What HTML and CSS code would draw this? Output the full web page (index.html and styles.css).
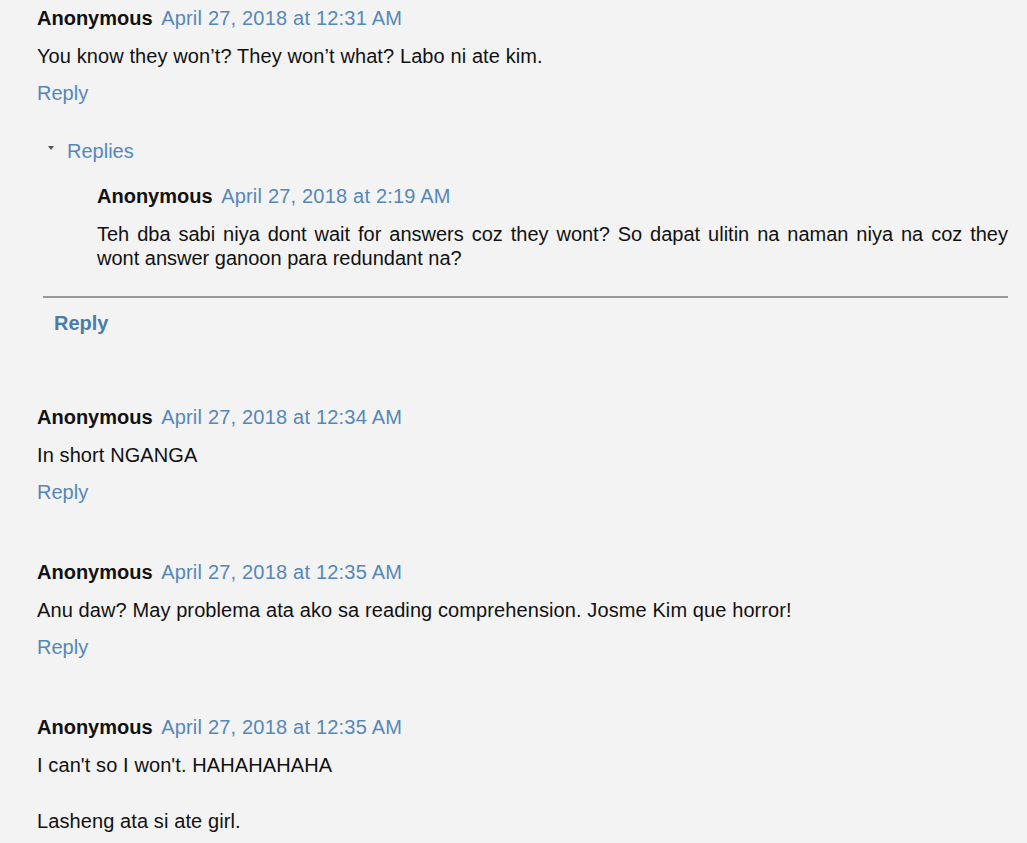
FILE: index.html
```html
<!DOCTYPE html>
<html>
<head>
	<meta charset="utf-8">
	<title>Comments</title>
	<link rel="stylesheet" href="styles.css">
</head>
<body>
	<div class="comments">
		<div class="comment">
			<div class="comment-header"><cite class="user">Anonymous</cite> <a class="datetime" href="#">April 27, 2018 at 12:31 AM</a></div>
			<p class="comment-content">You know they won’t? They won’t what? Labo ni ate kim.</p>
			<div class="comment-actions"><a href="#">Reply</a></div>

			<div class="thread">
				<div class="thread-toggle"><span class="arrow"></span><a href="#">Replies</a></div>
				<div class="reply">
					<div class="comment-header"><cite class="user">Anonymous</cite> <a class="datetime" href="#">April 27, 2018 at 2:19 AM</a></div>
					<p class="reply-content">Teh dba sabi niya dont wait for answers coz they wont? So dapat ulitin na naman niya na coz they wont answer ganoon para redundant na?</p>
				</div>
				<div class="thread-reply"><a href="#">Reply</a></div>
			</div>
		</div>

		<div class="comment">
			<div class="comment-header"><cite class="user">Anonymous</cite> <a class="datetime" href="#">April 27, 2018 at 12:34 AM</a></div>
			<p class="comment-content">In short NGANGA</p>
			<div class="comment-actions"><a href="#">Reply</a></div>
		</div>

		<div class="comment">
			<div class="comment-header"><cite class="user">Anonymous</cite> <a class="datetime" href="#">April 27, 2018 at 12:35 AM</a></div>
			<p class="comment-content">Anu daw? May problema ata ako sa reading comprehension. Josme Kim que horror!</p>
			<div class="comment-actions"><a href="#">Reply</a></div>
		</div>

		<div class="comment">
			<div class="comment-header"><cite class="user">Anonymous</cite> <a class="datetime" href="#">April 27, 2018 at 12:35 AM</a></div>
			<p class="comment-content">I can't so I won't. HAHAHAHAHA<br><br>Lasheng ata si ate girl.</p>
		</div>
	</div>
</body>
</html>
```

FILE: styles.css
```css
html, body {
	margin: 0;
	background-color: #f3f3f3;
}

.comments {
	padding: 4px 19px 0 37px;
	font-family: "Liberation Sans", Arial, sans-serif;
	font-size: 20px;
	color: #111;
}

.comments a {
	color: #5588b8;
	text-decoration: none;
}

.comment {
	margin-bottom: 52px;
}

.comment:first-child {
	margin-bottom: 66px;
}

.comment:last-child {
	margin-bottom: 0;
}

.comment-header {
	line-height: 28px;
}

.user {
	font-style: normal;
	font-weight: bold;
	color: #111;
}

.comments .datetime {
	margin-left: 3px;
	letter-spacing: 0.2px;
}

.comment-content {
	margin: 10px 0 0;
	line-height: 28px;
	letter-spacing: 0.1px;
}

.comment-actions {
	margin-top: 9px;
	line-height: 28px;
}

/* replies */
.thread {
	margin: 30px 0 0 6px;
}

.thread-toggle {
	display: flex;
	align-items: center;
	line-height: 28px;
}

.arrow {
	width: 0;
	height: 0;
	margin: 0 13px 6px 5px;
	border-left: 3px solid transparent;
	border-right: 3px solid transparent;
	border-top: 4px solid #555;
}

.reply {
	margin: 17px 0 0 54px;
}

.reply-content {
	margin: 12px 0 0;
	line-height: 24px;
	text-align: justify;
}

.thread-reply {
	margin-top: 26px;
	border-top: 2px solid #999;
	padding: 11px 0 0 11px;
	line-height: 28px;
}

.thread-reply a {
	font-weight: bold;
	color: #4a7caa;
}
```
